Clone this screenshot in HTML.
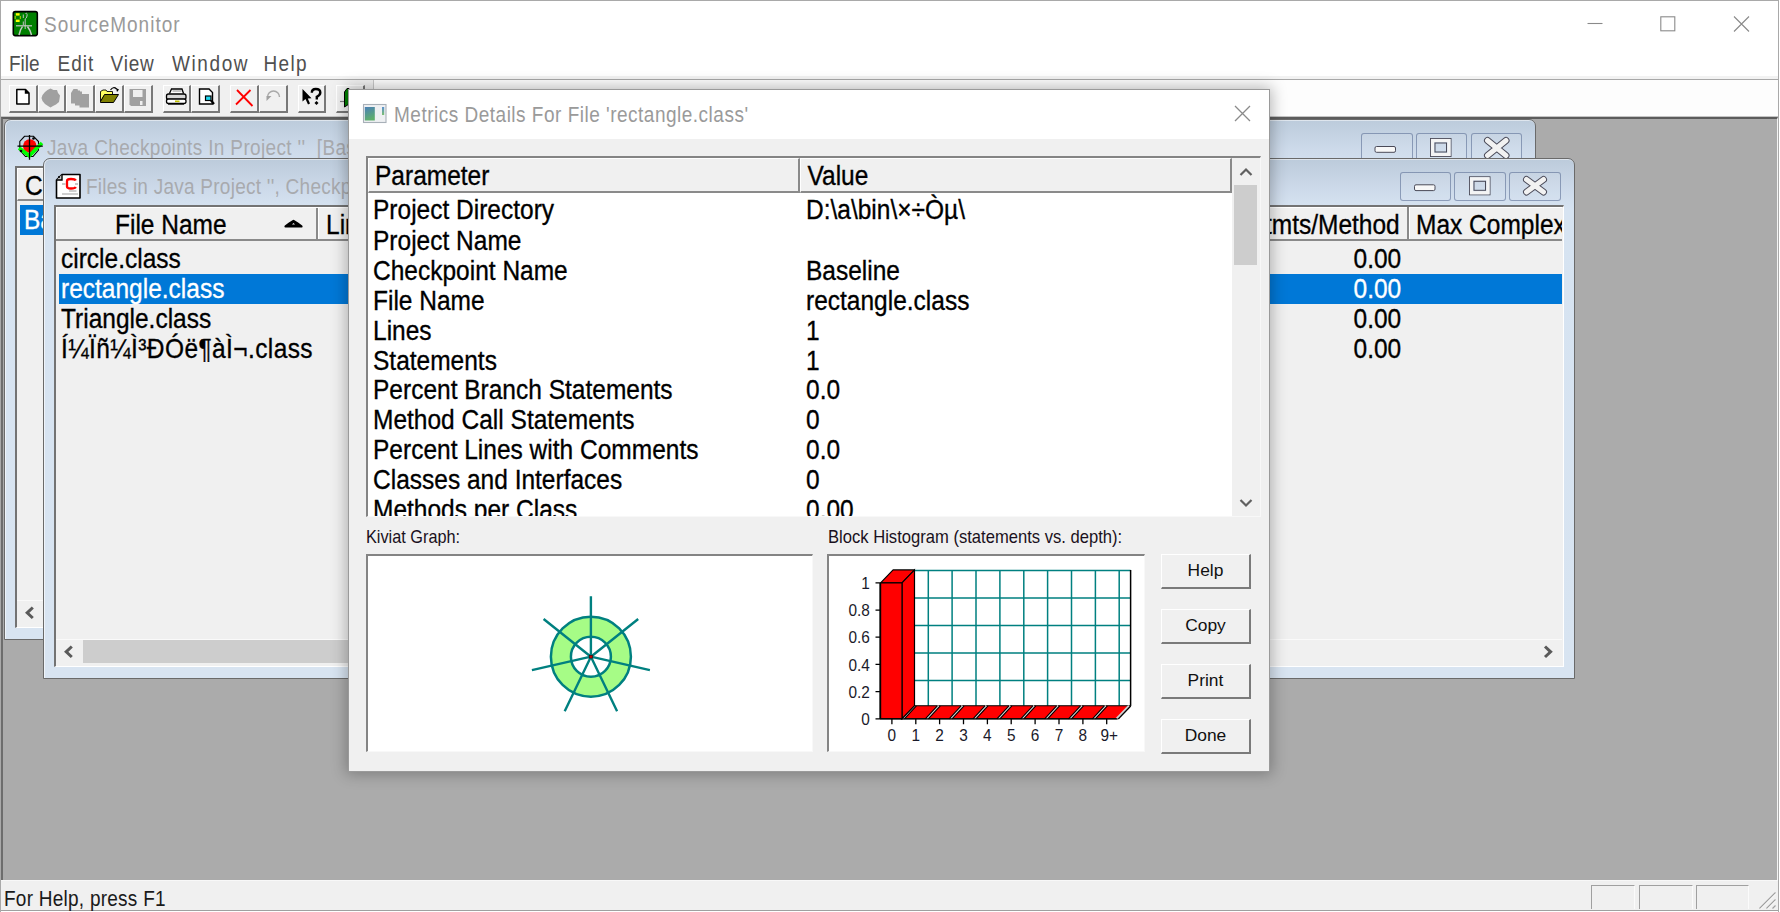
<!DOCTYPE html>
<html><head><meta charset="utf-8">
<style>
*{margin:0;padding:0;box-sizing:border-box}
html,body{width:1780px;height:912px;overflow:hidden;background:#fff;font-family:"Liberation Sans",sans-serif}
.a{position:absolute}
.t{position:absolute;white-space:nowrap;line-height:1;transform:scaleY(1.115);transform-origin:0 0}
.b{-webkit-text-stroke:0.3px currentColor}
.btn{width:90px;height:35px;background:#f0f0f0;border-top:1px solid #fff;border-left:1px solid #fff;border-right:2px solid #7a7a7a;border-bottom:2px solid #7a7a7a;font-size:17.4px;line-height:30px;text-align:center;color:#111}
.tbb{position:absolute;top:85px;height:27.5px;background:#f0f0f0;border-top:1px solid #fff;border-left:1px solid #fff;border-right:2px solid #787878;border-bottom:2px solid #787878}
.cbtn{position:absolute;width:51.5px;height:29px;border:1px solid rgba(80,100,140,.55);border-radius:3px;background:rgba(255,255,255,.06)}
.sp{position:absolute;top:885px;height:23.5px;border-top:1px solid #a0a0a0;border-left:1px solid #a0a0a0;border-right:1px solid #fbfbfb}
</style></head><body>
<!-- window border -->
<div class="a" style="left:0;top:0;width:1779px;height:912px;border-left:1px solid #a9a9a9;border-top:1px solid #a9a9a9;border-right:1px solid #a9a9a9"></div>
<!-- title bar -->
<div class="t" id="title" style="left:44px;top:14px;font-size:19px;letter-spacing:1px;color:#9a9a9a">SourceMonitor</div>

<!-- app icon -->
<svg class="a" style="left:12px;top:10px" width="27" height="27">
 <rect x="1.3" y="1.6" width="24" height="24" rx="2" fill="#008000" stroke="#000" stroke-width="1.6"/>
 <rect x="3.8" y="3.2" width="3.8" height="2.4" fill="#ffff00"/>
 <rect x="3.8" y="9.6" width="3.8" height="2.4" fill="#ffff00"/>
 <path d="M3.2 6 V9 M8.3 6 V9" stroke="#c8e000" stroke-width="0.9"/>
 <path d="M13.5 3.5 Q15.5 2.5 15 6 Q14.5 8.5 13.2 9 V13 M11.3 4.5 V8 M11.3 11.5 V15 M13.2 13 V19" stroke="#c0c0c0" stroke-width="1" fill="none"/>
 <path d="M4 15.8 H20" stroke="#c8c8c8" stroke-width="1.2"/>
 <path d="M10.5 16.5 L8.5 20 L7 25 M15.5 16.5 L18 20.5 L19.5 25" stroke="#c8c8c8" stroke-width="1.5" fill="none"/>
</svg>
<!-- window controls -->
<svg class="a" style="left:1580px;top:10px" width="180" height="26">
 <path d="M7.5 13.5 H22.5" stroke="#8a8a8a" stroke-width="1.1"/>
 <rect x="80.8" y="6.8" width="14" height="14" fill="none" stroke="#8a8a8a" stroke-width="1.1"/>
 <path d="M154 6.5 L169 21.5 M169 6.5 L154 21.5" stroke="#8a8a8a" stroke-width="1.1"/>
</svg>
<!-- menu -->
<div class="t" style="left:9px;top:53px;font-size:19px;color:#505050">File</div>
<div class="t" style="left:57.5px;top:53px;font-size:19px;color:#505050;letter-spacing:1px">Edit</div>
<div class="t" style="left:110.5px;top:53px;font-size:19px;color:#505050;letter-spacing:0.8px">View</div>
<div class="t" style="left:172px;top:53px;font-size:19px;color:#505050;letter-spacing:1.6px">Window</div>
<div class="t" style="left:263.5px;top:53px;font-size:19px;color:#505050;letter-spacing:1.3px">Help</div>
<div class="a" style="left:1px;top:76px;width:1777px;height:3px;background:#f2f2f2"></div><div class="a" style="left:1px;top:79px;width:1777px;height:1px;background:#a8a8a8"></div>
<!-- toolbar -->
<div class="a" style="left:1px;top:80px;width:372px;height:37px;background:#f0f0f0"></div>
<div class="a" style="left:373px;top:80px;width:1405px;height:37px;background:#fdfdfd"></div>
<!-- MDI client -->
<div class="a" style="left:1px;top:116px;width:1777px;height:1px;background:#c4c4c4"></div>
<div class="a" style="left:1px;top:117px;width:1777px;height:764px;background:#ababab;border-top:2px solid #5c5c5c;border-left:2px solid #6d6d6d;border-right:1px solid #f4f4f4;"></div>


<!-- toolbar buttons -->
<div class="a" style="left:373px;top:80px;width:1px;height:37px;background:#c8c8c8"></div>
<div class="tbb" style="left:9px;width:28.5px"></div>
<div class="tbb" style="left:37.5px;width:28.5px"></div>
<div class="tbb" style="left:66px;width:28.5px"></div>
<div class="tbb" style="left:94.5px;width:29px"></div>
<div class="tbb" style="left:123.5px;width:29px"></div>
<div class="tbb" style="left:162.5px;width:28.5px"></div>
<div class="tbb" style="left:191px;width:29px"></div>
<div class="tbb" style="left:230px;width:28.5px"></div>
<div class="tbb" style="left:258.5px;width:29px"></div>
<div class="tbb" style="left:297.5px;width:28.5px"></div>
<div class="tbb" style="left:336px;width:28.5px"></div>
<svg class="a" style="left:0;top:80px" width="373" height="37">
 <!-- new doc -->
 <path d="M16.8 9.5 H25.5 L29 13 V24 H16.8 Z" fill="#fff" stroke="#000" stroke-width="1.5" stroke-linejoin="round"/>
 <path d="M25.5 9.5 V13 H29" fill="#000" stroke="#000" stroke-width="1.4"/>
 <!-- disabled blob -->
 <path d="M50.5 8.5 L53.5 10 L57 10 L58 13 L60 15.5 L59.5 19 L59 22 L56 24.5 L53 26 L50.5 27.5 L48 26 L45 24 L42.5 21 L41.5 18 L42.5 15 L45 12 L47.5 10 Z" fill="#a0a0a0"/>
 <!-- disabled stacked -->
 <path d="M71 13 L73.5 9 L77.5 9 L78 10.5 L80 10.5 L80 11.5 L82 11.5 L82 14 L89 14 L89 27.5 L79.5 27.5 L79.5 25.5 L75 25.5 L75 23.5 L71 23.5 Z" fill="#a0a0a0"/>
 <!-- open folder -->
 <path d="M100.5 11.5 L103 10 L106 10 L107 11.5 L112.5 11.5 L112.5 14.5 L105 14.5 L100.5 21.5 Z" fill="#ffff60" stroke="#000" stroke-width="0.9"/>
 <path d="M100.5 21.5 L104.5 14.5 L118.5 14.5 L113.5 22.5 L100.5 22.5 Z" fill="#808000" stroke="#000" stroke-width="1"/>
 <path d="M110.5 10 Q113.5 6 116.5 9" fill="none" stroke="#000" stroke-width="1.2"/>
 <path d="M116 8 L119 9.5 L117 12 Z" fill="#000"/>
 <!-- disabled save -->
 <path d="M129.5 9 H146 V26 H131 L129.5 24.5 Z" fill="#a0a0a0"/>
 <rect x="133" y="10" width="9.5" height="7" fill="#efefef"/>
 <rect x="140" y="21" width="2.5" height="4" fill="#efefef"/>
 <!-- printer -->
 <path d="M169.5 13.5 L171.5 9 H182 L183.5 13.5" fill="#fff" stroke="#000" stroke-width="1.3"/>
 <path d="M172.5 11 H181.5" stroke="#808080" stroke-width="0.9"/>
 <rect x="166.5" y="14" width="19.5" height="5.5" rx="2" fill="#d8d8d8" stroke="#000" stroke-width="1.3"/>
 <rect x="166.5" y="19" width="19.5" height="4.5" rx="2" fill="#fff" stroke="#000" stroke-width="1.3"/>
 <rect x="175" y="20.5" width="4.5" height="1.6" fill="#c0c000"/>
 <path d="M168 24 H184" stroke="#000" stroke-width="1.3"/>
 <!-- print preview -->
 <path d="M199.5 9 H209 L212.5 12.5 V24 H199.5 Z" fill="#fff" stroke="#000" stroke-width="1.4"/>
 <rect x="205.5" y="16" width="5.5" height="4.5" fill="#20d8f0" stroke="#000" stroke-width="1.2"/>
 <path d="M211 20.5 L214 24" stroke="#000" stroke-width="2.2"/>
 <!-- red X -->
 <path d="M237 10 L252.5 26 M250.5 10 L236 24.5" stroke="#ff0000" stroke-width="1.8"/>
 <!-- disabled undo -->
 <path d="M267.5 17 A6 6 0 1 1 279.5 17" fill="none" stroke="#a8a8a8" stroke-width="1.4"/>
 <path d="M266.5 16 L271.5 16 L266.5 21 Z" fill="#a0a0a0"/>
 <!-- context help -->
 <path d="M302.5 9 L302.5 21.5 L305.5 19 L308 24.5 L310 23.5 L307.8 18.5 L311.5 18.2 Z" fill="#000"/>
 <path d="M311.8 12.8 Q311.8 9 315.8 9 Q320.3 9 320.3 12.5 Q320.3 15.2 316.8 16.8 L316.8 19.5" fill="none" stroke="#000" stroke-width="2.4"/>
 <path d="M316.5 21 L318.5 23 L316.5 25 L314.5 23 Z" fill="#000"/>
 <!-- partially hidden door -->
 <path d="M340 21.5 H344" stroke="#808080" stroke-width="1.2"/>
 <path d="M344.5 12 L347 8.5 H349 V24 L344.5 27 Z" fill="#008000" stroke="#000" stroke-width="1"/>
</svg>

<!-- ===== CHILD 1 ===== -->
<div class="a" style="left:4px;top:119px;width:1532px;height:521px;border:1px solid #6a6a6a;border-radius:7px 7px 0 0;background:linear-gradient(#bccbdb 0px,#cddaea 30px,#d6e3f1 50px,#d8e4f1 100%);overflow:hidden">
  <div class="a" style="left:0;top:0;right:0;bottom:0;border-left:1px solid rgba(255,255,255,.6);border-top:1px solid rgba(255,255,255,.5);border-radius:6px 6px 0 0"></div>
</div>
<div class="t" style="left:47px;top:137px;font-size:19px;color:#a8aaae;letter-spacing:0.35px">Java Checkpoints In Project ''&nbsp;&nbsp;[Baseline]</div>

<svg class="a" style="left:17px;top:134px" width="27" height="27">
 <path d="M7.5 2.3 H16.5 L21.5 7.5 V16 L16 22.5 H8.5 L2.8 16 V7.5 Z" fill="none" stroke="#000" stroke-width="1.1"/>
 <circle cx="12.8" cy="12" r="6.8" fill="#ff0000"/>
 <path d="M2 14 L12.3 21.8 L25 9" fill="none" stroke="#00ff00" stroke-width="3.6" stroke-linejoin="miter"/>
 <path d="M0.5 12.2 H25.8 M12.5 1 V25.7" stroke="#000" stroke-width="1.3"/>
 <circle cx="16.5" cy="4.5" r="1.3" fill="#000"/><circle cx="4" cy="17" r="1.3" fill="#000"/>
</svg>
<div class="cbtn" style="left:1361px;top:133px"></div>
<div class="cbtn" style="left:1415.5px;top:133px"></div>
<div class="cbtn" style="left:1470.5px;top:133px"></div>
<svg class="a" style="left:1360px;top:133px" width="165" height="25">
 <rect x="15" y="13.5" width="20.5" height="5.8" rx="1.5" fill="#f8f8f8" stroke="#4a4a58" stroke-width="1"/>
 <rect x="70.5" y="5.5" width="20.5" height="18" fill="none" stroke="#4a4a58" stroke-width="1"/>
 <rect x="72.5" y="7.5" width="16.5" height="14" fill="none" stroke="#f4f4f4" stroke-width="3.2"/>
 <rect x="75" y="10" width="11.5" height="9" fill="none" stroke="#4a4a58" stroke-width="1"/>
 <path d="M127.5 7.5 L146 22.5 M146 7.5 L127.5 22.5" stroke="#4a4a58" stroke-width="7" stroke-linecap="round"/>
 <path d="M127.5 7.5 L146 22.5 M146 7.5 L127.5 22.5" stroke="#f2f2f2" stroke-width="5" stroke-linecap="round"/>
</svg>
<!-- child1 list -->
<div class="a" style="left:15px;top:166px;width:1509px;height:462px;background:#f0f0f0;border-left:2px solid #737373;border-top:2px solid #737373;border-right:1px solid #fff;border-bottom:1px solid #fff"></div>
<div class="a" style="left:17px;top:168px;width:1505px;height:33px;background:#f0f0f0;border-top:1px solid #fff;border-left:1px solid #fff;border-bottom:2px solid #8a8a8a"></div>
<div class="t b" style="left:25px;top:173px;font-size:24.5px;color:#000">C</div>
<div class="a" style="left:20px;top:205px;width:1500px;height:30px;background:#0078d7"></div>
<div class="t b" style="left:24px;top:207px;font-size:24.5px;color:#fff">Baseline</div>
<div class="a" style="left:17px;top:600px;width:1505px;height:27px;background:#f0f0f0;border-top:1px solid #fafafa"></div>
<svg class="a" style="left:24px;top:606px" width="12" height="14"><path d="M8.8 1.5 L3.2 6.8 L8.8 12" stroke="#5a5a5a" stroke-width="3" fill="none"/></svg>

<!-- ===== CHILD 2 ===== -->
<div class="a" style="left:43px;top:158px;width:1532px;height:521px;border:1px solid #6a6a6a;border-radius:7px 7px 0 0;background:linear-gradient(#bccbdb 0px,#cddaea 30px,#d6e3f1 50px,#d8e4f1 100%);overflow:hidden">
  <div class="a" style="left:0;top:0;right:0;bottom:0;border-left:1px solid rgba(255,255,255,.6);border-top:1px solid rgba(255,255,255,.5);border-radius:6px 6px 0 0"></div>
</div>
<div class="t" style="left:86px;top:176px;font-size:19px;color:#a8aaae;letter-spacing:0.25px">Files in Java Project '', Checkpoint 'Baseline'</div>

<svg class="a" style="left:55px;top:173px" width="28" height="27">
 <path d="M7 1.5 H25 V25 H1.5 V7 Z" fill="#fff" stroke="#000" stroke-width="1.6" stroke-linejoin="round"/>
 <path d="M1.5 7 H7 V1.5" fill="#c8c8c8" stroke="#000" stroke-width="1.4"/>
 <circle cx="4" cy="4" r="1" fill="#000"/>
 <path d="M20.8 7.5 Q20 6 16 6 Q12 6 12 8 V13.5 Q12 15.5 16 15.5 Q20 15.5 20.8 14" fill="none" stroke="#ff0000" stroke-width="2.3"/>
 <path d="M7 11 H10.5 M20 11 H23" stroke="#909090" stroke-width="1"/>
 <path d="M14 18 H21.5 M7 21 H23" stroke="#a0a0a0" stroke-width="1.1"/>
</svg>
<div class="cbtn" style="left:1399.5px;top:171.5px"></div>
<div class="cbtn" style="left:1454px;top:171.5px"></div>
<div class="cbtn" style="left:1509px;top:171.5px"></div>
<svg class="a" style="left:1399px;top:171px" width="165" height="31">
 <rect x="15.5" y="13.8" width="20.5" height="5.8" rx="1.5" fill="#f8f8f8" stroke="#4a4a58" stroke-width="1"/>
 <rect x="70.5" y="5.8" width="20.5" height="18" fill="none" stroke="#4a4a58" stroke-width="1"/>
 <rect x="72.5" y="7.8" width="16.5" height="14" fill="none" stroke="#f4f4f4" stroke-width="3.2"/>
 <rect x="75" y="10.3" width="11.5" height="9" fill="none" stroke="#4a4a58" stroke-width="1"/>
 <path d="M127.5 8.5 L144.5 21 M144.5 8.5 L127.5 21" stroke="#4a4a58" stroke-width="7" stroke-linecap="round"/>
 <path d="M127.5 8.5 L144.5 21 M144.5 8.5 L127.5 21" stroke="#f2f2f2" stroke-width="5" stroke-linecap="round"/>
</svg>
<!-- child2 list -->
<div class="a" style="left:54px;top:205px;width:1510px;height:462px;background:#f0f0f0;border-left:2px solid #737373;border-top:2px solid #737373;border-right:1px solid #fff;border-bottom:1px solid #fff"></div>
<div class="a" style="left:56px;top:207px;width:1506px;height:34px;background:#f0f0f0;border-top:1px solid #fff;border-bottom:2px solid #8a8a8a"></div>
<div class="a" style="left:56px;top:208px;width:262px;height:31px;border-left:1px solid #fff;border-right:2px solid #8a8a8a"></div>
<div class="a" style="left:318px;top:208px;width:1px;height:31px;background:#fff"></div>
<div class="a" style="left:1407px;top:207px;width:2px;height:33px;background:#8a8a8a"></div>
<div class="a" style="left:1409px;top:208px;width:1px;height:31px;background:#fff"></div>
<div class="t b" style="left:115px;top:212px;font-size:24.5px;color:#000">File Name</div>
<svg class="a" style="left:283px;top:218px" width="21" height="12"><path d="M2.5 8.5 L6.5 5.5 L10.5 2.8 L14.5 5.5 L18.5 8.5 Z" fill="#000" stroke="#000" stroke-width="2.2" stroke-linejoin="round"/><path d="M9 6.5 L10.5 5 L12 6.5 Z" fill="#f0f0f0"/></svg>
<div class="t b" style="left:326px;top:212px;font-size:24.5px;color:#000">Lines</div>
<div class="t b" style="left:1200px;top:212px;font-size:24.5px;color:#000">Avg Stmts/Method</div>
<div class="a" style="left:1410px;top:208px;width:152px;height:31px;overflow:hidden"><div class="t b" style="left:6px;top:4px;font-size:24.5px;color:#000">Max Complexity</div></div>
<div class="a" style="left:59px;top:274px;width:1503px;height:29.5px;background:#0078d7"></div>
<div class="t b" style="left:61px;top:246px;font-size:24.5px;color:#000">circle.class</div>
<div class="t b" style="left:61px;top:276px;font-size:24.5px;color:#fff">rectangle.class</div>
<div class="t b" style="left:61px;top:306px;font-size:24.5px;color:#000">Triangle.class</div>
<div class="t b" style="left:61px;top:336px;font-size:24.5px;color:#000;letter-spacing:0.4px">&Iacute;&frac14;&Iuml;&ntilde;&frac14;&Igrave;&sup3;&ETH;&Oacute;&euml;&para;&agrave;&Igrave;&not;.class</div>
<div class="t b" style="left:1353.5px;top:246px;font-size:24.5px;color:#000">0.00</div>
<div class="t b" style="left:1353.5px;top:276px;font-size:24.5px;color:#fff">0.00</div>
<div class="t b" style="left:1353.5px;top:306px;font-size:24.5px;color:#000">0.00</div>
<div class="t b" style="left:1353.5px;top:336px;font-size:24.5px;color:#000">0.00</div>
<!-- hscroll -->
<div class="a" style="left:56px;top:639px;width:1506px;height:27px;background:#f0f0f0;border-top:1px solid #fafafa"></div>
<div class="a" style="left:82.8px;top:640px;width:300px;height:23px;background:#cdcdcd"></div>
<svg class="a" style="left:63px;top:645px" width="12" height="14"><path d="M8.8 1.5 L3.2 6.8 L8.8 12" stroke="#5a5a5a" stroke-width="3" fill="none"/></svg>
<svg class="a" style="left:1542px;top:645px" width="12" height="14"><path d="M3 1.5 L8.6 6.8 L3 12" stroke="#5a5a5a" stroke-width="3" fill="none"/></svg>


<!-- ===== DIALOG ===== -->
<div class="a" style="left:348px;top:89px;width:922px;height:683px;background:#f0f0f0;border:1px solid #9a9a9a;box-shadow:0 0 14px 2px rgba(0,0,0,.28)"></div>
<div class="a" style="left:349px;top:90px;width:920px;height:49px;background:#fff"></div>
<svg class="a" style="left:362px;top:103px" width="26" height="21"><defs><linearGradient id="dg" x1="0" y1="0" x2="0.3" y2="1"><stop offset="0" stop-color="#4a7fb8"/><stop offset="1" stop-color="#5eae6c"/></linearGradient><linearGradient id="dg2" x1="0" y1="0" x2="0" y2="1"><stop offset="0" stop-color="#5a8fd0"/><stop offset="1" stop-color="#7cc070"/></linearGradient></defs><rect x="1.5" y="1.5" width="22.5" height="18" fill="#eef0f2" stroke="#a8b0b8" stroke-width="1.1"/><rect x="2.8" y="4" width="10" height="13.5" fill="url(#dg)"/><rect x="20" y="4" width="2.2" height="8" fill="url(#dg2)"/></svg>
<div class="t" style="left:394px;top:104px;font-size:19px;color:#9a9a9a;letter-spacing:0.5px">Metrics Details For File 'rectangle.class'</div>
<svg class="a" style="left:1234px;top:105px" width="17" height="17"><path d="M1 1 L16 16 M16 1 L1 16" stroke="#8a8a8a" stroke-width="1.3"/></svg>
<!-- list box -->
<div class="a" style="left:366px;top:156px;width:895px;height:361px;background:#fff;border-left:2px solid #848484;border-top:2px solid #848484;border-right:1px solid #f8f8f8;border-bottom:1px solid #f8f8f8;overflow:hidden">
  <div class="a" style="left:0;top:0;width:432px;height:35px;background:#f0f0f0;border-top:1px solid #fff;border-left:1px solid #fff;border-right:2px solid #8a8a8a;border-bottom:2px solid #8a8a8a"></div>
  <div class="a" style="left:432px;top:0;width:431.5px;height:35px;background:#f0f0f0;border-top:1px solid #fff;border-left:1px solid #fff;border-right:2px solid #8a8a8a;border-bottom:2px solid #8a8a8a"></div>
  <div class="t b" style="left:7px;top:5px;font-size:24.5px;color:#000">Parameter</div>
  <div class="t b" style="left:439.5px;top:5px;font-size:24.5px;color:#000">Value</div>
  <div class="a" style="left:864px;top:0;width:29px;height:359px;background:#f0f0f0"></div>
  <div class="a" style="left:865.8px;top:27px;width:23.5px;height:80px;background:#cdcdcd"></div>
  <svg class="a" style="left:870.5px;top:9px" width="14" height="10"><path d="M1.5 8 L7 2.5 L12.5 8" stroke="#606060" stroke-width="2.2" fill="none"/></svg>
  <svg class="a" style="left:870.5px;top:339.5px" width="14" height="10"><path d="M1.5 2 L7 7.5 L12.5 2" stroke="#606060" stroke-width="2.2" fill="none"/></svg>
  <div class="t b" style="left:5px;top:37.5px;font-size:24.5px;line-height:26.906px;color:#000">Project Directory<br>Project Name<br>Checkpoint Name<br>File Name<br>Lines<br>Statements<br>Percent Branch Statements<br>Method Call Statements<br>Percent Lines with Comments<br>Classes and Interfaces<br>Methods per Class</div>
  <div class="t b" style="left:438px;top:37.5px;font-size:24.5px;line-height:26.906px;color:#000">D:\a\bin\&times;&divide;&Ograve;&micro;\<br>&nbsp;<br>Baseline<br>rectangle.class<br>1<br>1<br>0.0<br>0<br>0.0<br>0<br>0.00</div>
</div>
<div class="t" style="left:366px;top:527px;font-size:16.3px;color:#1a1020">Kiviat Graph:</div>
<div class="t" style="left:828px;top:528.5px;font-size:16.6px;color:#1a1020">Block Histogram (statements vs. depth):</div>
<!-- kiviat box -->
<div class="a" style="left:366px;top:554px;width:447px;height:198px;background:#fff;border-left:2px solid #848484;border-top:2px solid #848484;border-right:1px solid #f8f8f8;border-bottom:1px solid #f8f8f8"></div>
<!-- histogram box -->
<div class="a" style="left:826.5px;top:554px;width:318.5px;height:198px;background:#fff;border-left:2px solid #848484;border-top:2px solid #848484;border-right:1px solid #f8f8f8;border-bottom:1px solid #f8f8f8"></div>

<svg class="a" style="left:0;top:0" width="1780" height="912" viewBox="0 0 1780 912">
 <circle cx="590.9" cy="656.7" r="40" fill="#a6fc86" stroke="#008080" stroke-width="2.5"/>
 <circle cx="590.9" cy="656.7" r="20" fill="#fff" stroke="#008080" stroke-width="2.5"/>
 <path d="M590.9 656.7 L590.9 596.2 M590.9 656.7 L638.2 619.0 M590.9 656.7 L649.9 670.2 M590.9 656.7 L617.1 711.2 M590.9 656.7 L564.7 711.2 M590.9 656.7 L531.9 670.2 M590.9 656.7 L543.6 619.0 " stroke="#008080" stroke-width="2.4" fill="none"/>
 <rect x="589.3" y="655.3" width="3.2" height="2.8" fill="#cc0000" stroke="#300" stroke-width="0.6"/>
</svg>
<svg class="a" style="left:0;top:0" width="1780" height="912" viewBox="0 0 1780 912"><path d="M914.4 570.5 H1130.6 M914.4 598.0 H1130.6 M914.4 625.5 H1130.6 M914.4 653.0 H1130.6 M914.4 680.5 H1130.6 M928.3 570.0 V705.8 M952.1 570.0 V705.8 M976.0 570.0 V705.8 M999.9 570.0 V705.8 M1023.8 570.0 V705.8 M1047.6 570.0 V705.8 M1071.5 570.0 V705.8 M1095.4 570.0 V705.8 M1119.2 570.0 V705.8" stroke="#008080" stroke-width="1.5" fill="none"/>
<path d="M1130.6 570 V705.75" stroke="#000" stroke-width="1.5"/>
<path d="M902 718.75 L914.5 705.75 L1130.0 705.75 L1117.5 718.75 Z" fill="#ff0000" stroke="#000" stroke-width="1.2"/>
<path d="M902.9 718.8 L914.9 705.8 M926.8 718.8 L938.8 705.8 M950.6 718.8 L962.6 705.8 M974.5 718.8 L986.5 705.8 M998.4 718.8 L1010.4 705.8 M1022.2 718.8 L1034.2 705.8 M1046.1 718.8 L1058.1 705.8 M1070.0 718.8 L1082.0 705.8 M1093.9 718.8 L1105.9 705.8 " stroke="#d0d0d0" stroke-width="2"/>
<path d="M901.4 718.8 L913.4 705.8 M904.4 718.8 L916.4 705.8 M925.3 718.8 L937.3 705.8 M928.3 718.8 L940.3 705.8 M949.1 718.8 L961.1 705.8 M952.1 718.8 L964.1 705.8 M973.0 718.8 L985.0 705.8 M976.0 718.8 L988.0 705.8 M996.9 718.8 L1008.9 705.8 M999.9 718.8 L1011.9 705.8 M1020.8 718.8 L1032.8 705.8 M1023.8 718.8 L1035.8 705.8 M1044.6 718.8 L1056.6 705.8 M1047.6 718.8 L1059.6 705.8 M1068.5 718.8 L1080.5 705.8 M1071.5 718.8 L1083.5 705.8 M1092.4 718.8 L1104.4 705.8 M1095.4 718.8 L1107.4 705.8 " stroke="#000" stroke-width="1.1"/>
<path d="M1116.5 718.75 L1129 705.75" stroke="#d0d0d0" stroke-width="2"/><path d="M1118.3 719 L1130.8 706" stroke="#000" stroke-width="1.1"/>
<path d="M880.6 582.9 L893.1 569.9 L914.5 569.9 L902 582.9 Z" fill="#ff0000" stroke="#000" stroke-width="1.2" stroke-linejoin="round"/>
<path d="M902 582.9 L914.5 569.9 L914.5 705.75 L902 718.75 Z" fill="#ff0000" stroke="#000" stroke-width="1.2"/>
<rect x="880.6" y="582.9" width="21.399999999999977" height="135.85000000000002" fill="#ff0000" stroke="#000" stroke-width="1.2"/>
<path d="M880 582.9 V718.8 M876 718.8 H1117.5 M875.5 718.8 H880 M875.5 691.6 H880 M875.5 664.4 H880 M875.5 637.2 H880 M875.5 610.1 H880 M875.5 582.9 H880 M891.9 718.8 V724.2 M915.8 718.8 V724.2 M939.6 718.8 V724.2 M963.5 718.8 V724.2 M987.4 718.8 V724.2 M1011.2 718.8 V724.2 M1035.1 718.8 V724.2 M1059.0 718.8 V724.2 M1082.9 718.8 V724.2 M1106.7 718.8 V724.2 " stroke="#000" stroke-width="1.3" fill="none"/>
<g font-family="Liberation Sans" font-size="15.4" fill="#1a1a2a"><text transform="translate(869.8 724.90) scale(1 1.115)" text-anchor="end">0</text><text transform="translate(869.8 697.73) scale(1 1.115)" text-anchor="end">0.2</text><text transform="translate(869.8 670.56) scale(1 1.115)" text-anchor="end">0.4</text><text transform="translate(869.8 643.39) scale(1 1.115)" text-anchor="end">0.6</text><text transform="translate(869.8 616.22) scale(1 1.115)" text-anchor="end">0.8</text><text transform="translate(869.8 589.05) scale(1 1.115)" text-anchor="end">1</text><text transform="translate(891.90 740.6) scale(1 1.115)" text-anchor="middle">0</text><text transform="translate(915.77 740.6) scale(1 1.115)" text-anchor="middle">1</text><text transform="translate(939.64 740.6) scale(1 1.115)" text-anchor="middle">2</text><text transform="translate(963.51 740.6) scale(1 1.115)" text-anchor="middle">3</text><text transform="translate(987.38 740.6) scale(1 1.115)" text-anchor="middle">4</text><text transform="translate(1011.25 740.6) scale(1 1.115)" text-anchor="middle">5</text><text transform="translate(1035.12 740.6) scale(1 1.115)" text-anchor="middle">6</text><text transform="translate(1058.99 740.6) scale(1 1.115)" text-anchor="middle">7</text><text transform="translate(1082.86 740.6) scale(1 1.115)" text-anchor="middle">8</text><text transform="translate(1109.23 740.6) scale(1 1.115)" text-anchor="middle">9+</text></g></svg>
<!-- buttons -->
<div class="a btn" style="left:1161px;top:554px">Help</div>
<div class="a btn" style="left:1161px;top:609px">Copy</div>
<div class="a btn" style="left:1161px;top:664px">Print</div>
<div class="a btn" style="left:1161px;top:719px">Done</div>

<!-- status bar -->
<div class="a" style="left:1px;top:880px;width:1777px;height:31px;background:#f0f0f0;border-top:1px solid #f8f8f8;border-bottom:1px solid #a0a0a0"></div>
<div class="t" style="left:4px;top:888px;font-size:19px;color:#1a1a1a;letter-spacing:0.25px">For Help, press F1</div>

<div class="sp" style="left:1591px;width:44px"></div>
<div class="sp" style="left:1639px;width:54px"></div>
<div class="sp" style="left:1696px;width:53px"></div>
<svg class="a" style="left:1758px;top:891px" width="20" height="19"><path d="M1.5 17.5 L17.5 1.5 M8.5 17.5 L17.5 8.5 M14.5 17.5 L17.5 14.5" stroke="#a0a0a0" stroke-width="1.2"/><path d="M2.5 18 L18 2.5 M9.5 18 L18 9.5" stroke="#fff" stroke-width="0.8"/></svg>
</body></html>
